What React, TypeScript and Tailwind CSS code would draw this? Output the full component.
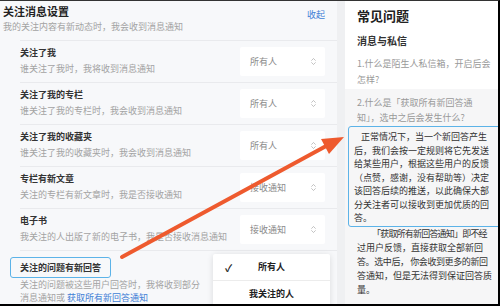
import React from "react";
import { ChevronsUpDown } from "lucide-react";

type Row = {
  title: string;
  desc: string;
  value: string;
};

const rows: Row[] = [
  { title: "关注了我", desc: "谁关注了我时，我将收到消息通知", value: "所有人" },
  { title: "关注了我的专栏", desc: "谁关注了我的专栏时，我会收到消息通知", value: "所有人" },
  { title: "关注了我的收藏夹", desc: "谁关注了我的收藏夹时，我会收到消息通知", value: "所有人" },
  { title: "专栏有新文章", desc: "关注的专栏有新文章时，我是否接收通知", value: "接收通知" },
  { title: "电子书", desc: "我关注的人出版了新的电子书，我是否接收消息通知", value: "接收通知" },
];

const Select = ({ value }: { value: string }) => (
  <div className="w-[85px] h-[29px] bg-white rounded-[2px] flex items-center justify-between pl-[10px] pr-[7px] text-[9px] text-[#8a8a8a]">
    <span>{value}</span>
    <ChevronsUpDown size={9} strokeWidth={1.6} color="#9a9a9a" />
  </div>
);

const boxLines = [
  "正常情况下，当一个新回答产生",
  "后，我们会按一定规则将它先发送",
  "给某些用户，根据这些用户的反馈",
  "（点赞，感谢，没有帮助等）决定",
  "该回答后续的推送，以此确保大部",
  "分关注者可以接收到更加优质的回",
  "答。",
];

const afterLines = [
  { text: "「获取所有新回答通知」即不经", cls: "pl-[15px] tracking-[-0.8px]" },
  { text: "过用户反馈，直接获取全部新回", cls: "" },
  { text: "答。选中后， 你会收到更多的新回", cls: "tracking-[-0.4px]" },
  { text: "答通知，但是无法得到保证回答质", cls: "" },
  { text: "量。", cls: "" },
];

export default function App() {
  return (
    <div
      className="relative w-[500px] h-[306px] overflow-hidden flex bg-[#eff0f2] border-t border-t-[#333] border-r-2 border-r-black border-b-2 border-b-black"
      style={{ fontFamily: '"Noto Sans CJK SC", "Noto Sans", sans-serif' }}
    >
      {/* settings panel */}
      <div className="w-[337px] shrink-0 bg-[#f7f8fa] flex flex-col">
        <div className="h-[39px] flex justify-between pl-[3px] pr-[12px]">
          <div className="pt-[2px]">
            <div className="text-[11px] leading-[16px] font-bold text-[#222]">关注消息设置</div>
            <div className="text-[9px] leading-[14px] mt-[1px] text-[#a3a3a3]">我的关注内容有新动态时，我会收到消息通知</div>
          </div>
          <div className="text-[9px] text-[#3f7fd6] pt-[7px]">收起</div>
        </div>
        <div className="pl-[20px] flex flex-col">
          {rows.map((r) => (
            <div key={r.title} className="h-[42px] border-t border-[#e9eaed] flex items-center justify-between pr-[12px]">
              <div className="self-start pt-[5px]">
                <div className="text-[9px] leading-[14px] font-semibold text-[#333]">{r.title}</div>
                <div className="text-[9px] leading-[14px] mt-[2px] text-[#a3a3a3]">{r.desc}</div>
              </div>
              <Select value={r.value} />
            </div>
          ))}
          <div className="border-t border-[#e9eaed] pt-[1px] relative">
            <div className="inline-block -ml-[10px] px-[9px] py-[3px] border-[1.5px] border-[#5cb3e8] rounded-[3px] text-[9px] leading-[13px] font-semibold text-[#333]">
              关注的问题有新回答
            </div>
            <div className="text-[9px] leading-[13px] text-[#a3a3a3]">
              关注的问题被这些用户回答时，我将收到部分
              <br />
              消息通知或 <span className="text-[#3f7fd6]">获取所有新回答通知</span>
            </div>
            <div className="absolute left-[193px] top-[3px] w-[117px] bg-white shadow-[0_1px_6px_rgba(0,0,0,0.12)] rounded-[2px] text-[9px] font-semibold text-[#222]">
              <div className="h-[27px] relative flex items-center justify-center border-b border-[#ececec]">
                <span className="absolute left-[12px] text-[10px]">✓</span>
                所有人
              </div>
              <div className="h-[26px] flex items-center justify-center">我关注的人</div>
            </div>
          </div>
        </div>
      </div>

      <div className="w-[8px] shrink-0" />

      {/* FAQ panel */}
      <div className="flex-1 bg-white flex flex-col whitespace-nowrap">
        <div className="px-[12px] pt-[6px]">
          <div className="text-[13px] leading-[18px] font-bold text-[#222]">常见问题</div>
          <div className="text-[10px] leading-[14px] font-bold text-[#333] mt-[9px]">消息与私信</div>
          <div className="text-[9px] leading-[16px] text-[#999] mt-[8px] pb-[1px]">
            1.什么是陌生人私信箱，开启后会
            <br />
            怎样?
          </div>
        </div>
        <div className="flex-1 bg-[#f6f6f7] pt-[6px]">
          <div className="px-[12px] text-[9px] leading-[15px] text-[#999]">
            2.什么是「获取所有新回答通
            <br />
            知」，选中之后会发生什么?
          </div>
          <div className="mx-[3px] mt-[1px] border-[1.5px] border-[#5cb3e8] rounded-[3px] pl-[5px] pt-[3px] pb-[1px] text-[9px] leading-[13.5px] text-[#333]">
            {boxLines.map((l, i) => (
              <div key={i} className={i === 0 ? "pl-[7px]" : ""}>
                {l}
              </div>
            ))}
          </div>
          <div className="px-[12px] text-[9px] leading-[14px] text-[#333]">
            {afterLines.map((l, i) => (
              <div key={i} className={l.cls}>
                {l.text}
              </div>
            ))}
          </div>
        </div>
      </div>

      {/* annotation arrow */}
      <svg className="absolute inset-0 pointer-events-none" width="500" height="306" viewBox="0 0 500 306">
        <line x1="122" y1="256" x2="328" y2="144" stroke="#ee5a2e" strokeWidth="4" strokeLinecap="round" />
        <polygon points="344,136 329,153 321,138" fill="#ee5a2e" />
      </svg>
    </div>
  );
}
